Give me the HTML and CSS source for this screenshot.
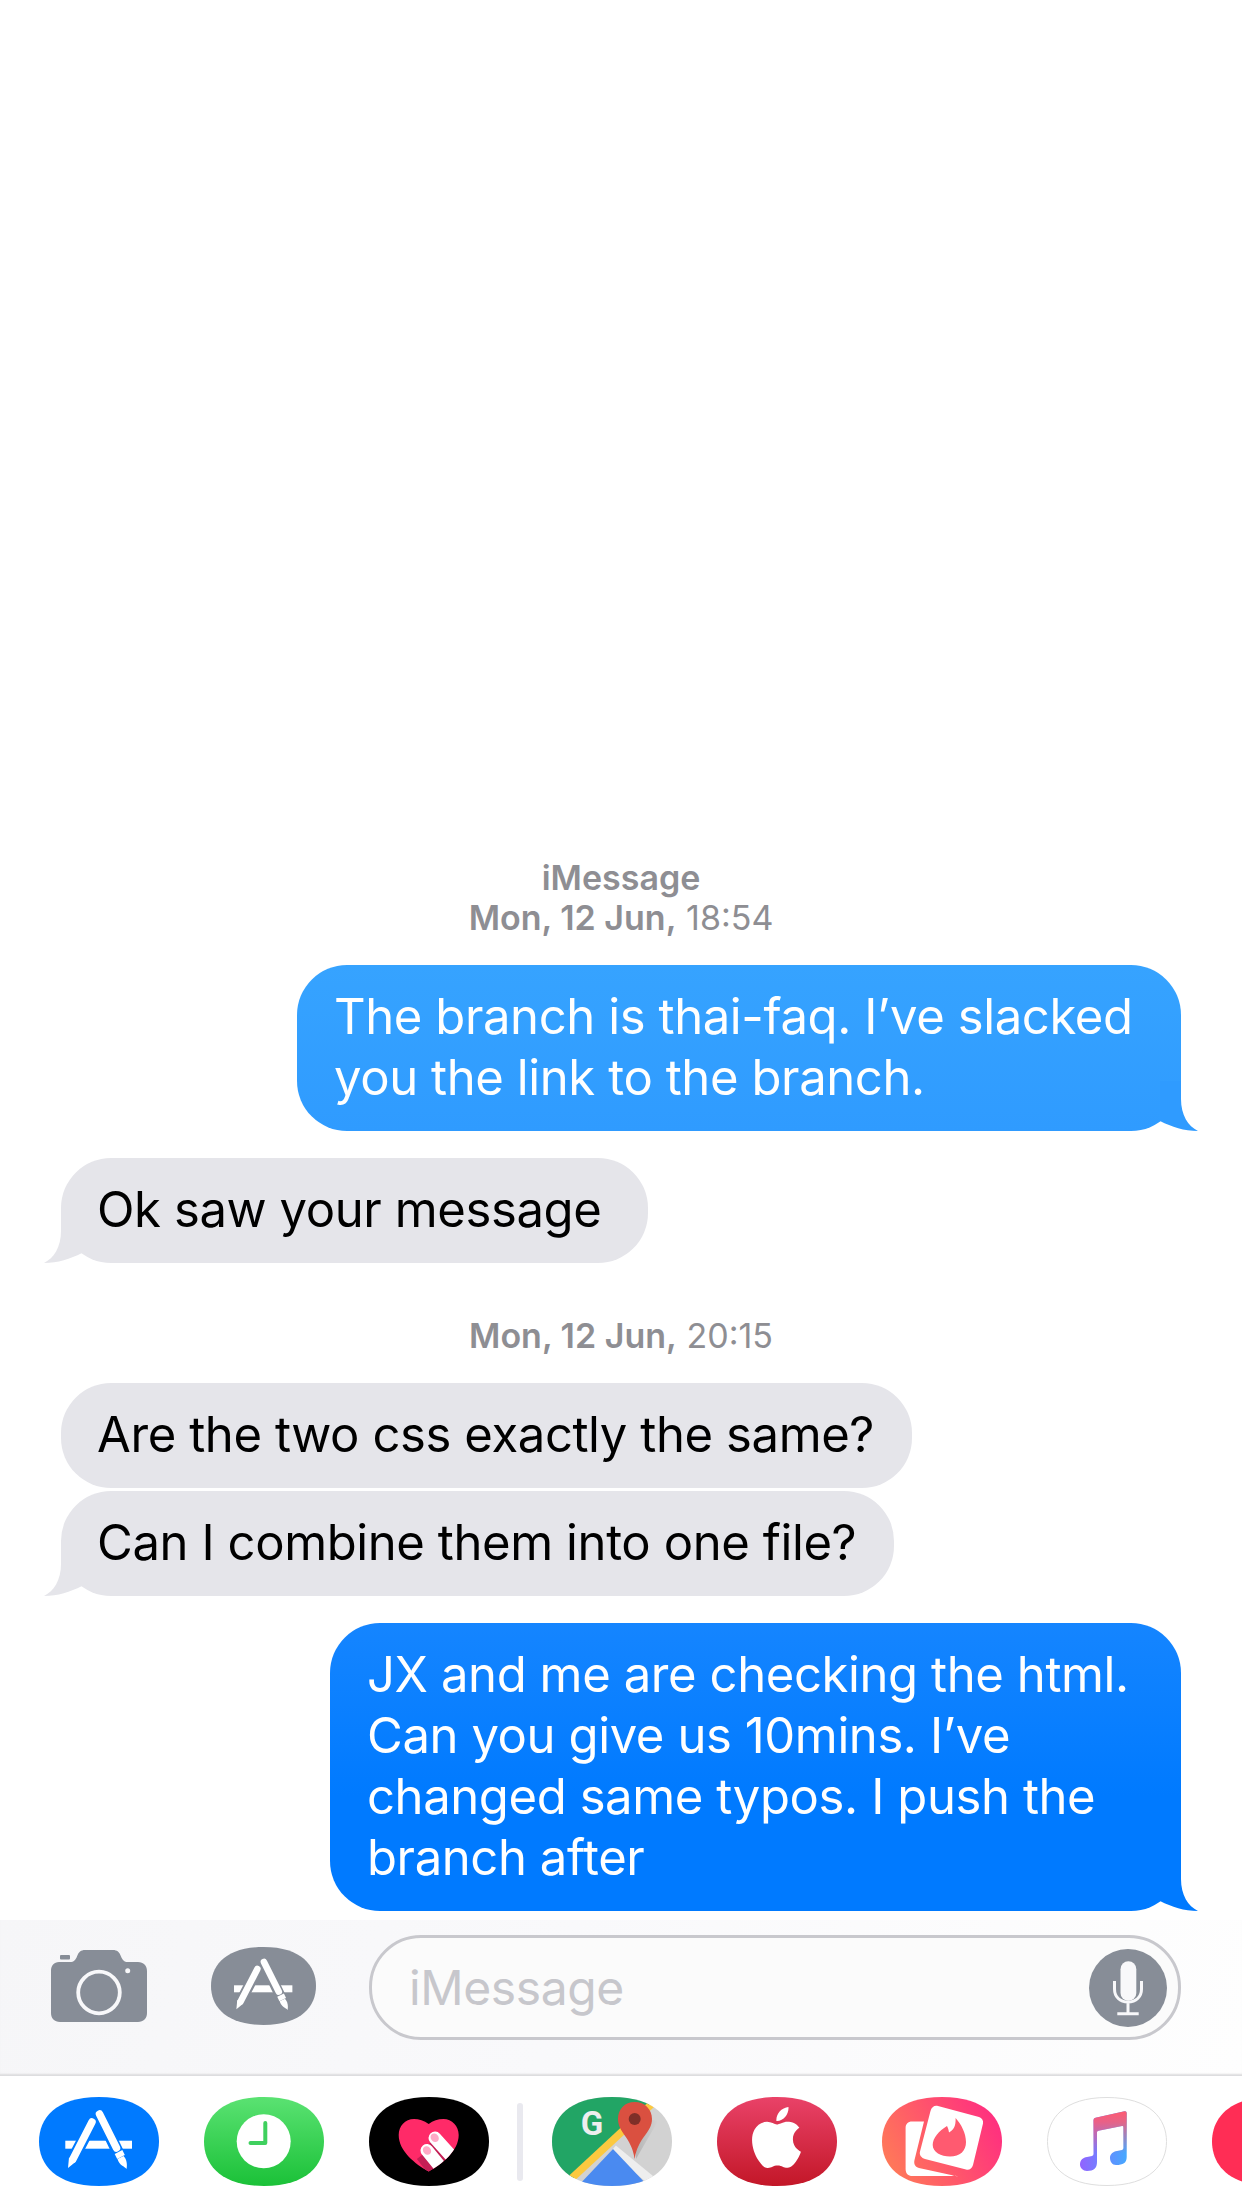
FILE: index.html
```html
<!DOCTYPE html>
<html lang="en">
<head>
<meta charset="utf-8">
<title>iMessage</title>
<link rel="stylesheet" href="styles.css">
</head>
<body>
<main class="thread">
  <div class="stamp"><b>iMessage</b><br><b>Mon, 12 Jun,</b> 18:54</div>
  <div class="bubble sent sky">The branch is thai-faq. I’ve slacked
you the link to the branch.<svg class="tail tail-r" viewBox="0 0 40 50"><path d="M21 0V18C21 34 28 45 38 50C24 50 12 46 0 40V0Z"/></svg></div>
  <div class="bubble recv saw">Ok saw your message<svg class="tail tail-l" viewBox="0 0 40 50"><path d="M19 0V18C19 34 12 45 2 50C16 50 28 46 40 40V0Z"/></svg></div>
  <div class="stamp stamp-later"><b>Mon, 12 Jun,</b> 20:15</div>
  <div class="bubble recv same">Are the two css exactly the same?</div>
  <div class="bubble recv tight combine">Can I combine them into one file?<svg class="tail tail-l" viewBox="0 0 40 50"><path d="M19 0V18C19 34 12 45 2 50C16 50 28 46 40 40V0Z"/></svg></div>
  <div class="bubble sent deep">JX and me are checking the html.
Can you give us 10mins. I’ve
changed same typos. I push the
branch after<svg class="tail tail-r" viewBox="0 0 40 50"><path d="M21 0V18C21 34 28 45 38 50C24 50 12 46 0 40V0Z"/></svg></div>
</main>

<section class="toolbar">
  <svg class="camera" viewBox="0 0 96 72">
    <path fill="#878d97" d="M8 12H19C23 12 24.500 10 26 6.500C27.500 2 30 0 34 0H62C66 0 68.500 2 70 6.500C71.500 10 73 12 77 12H87C92.500 12 96 15.500 96 21V63C96 68.500 92.500 72 87 72H9C3.500 72 0 68.500 0 63V21C0 15.500 3 12 8 12Z"/>
    <rect fill="#878d97" x="9" y="5" width="10" height="4.500" rx="1"/>
    <circle cx="48" cy="42.500" r="20.800" fill="none" stroke="#f8f8fa" stroke-width="3.800"/>
    <circle cx="76.700" cy="20.700" r="2.500" fill="#f8f8fa"/>
  </svg>
  <svg class="store-btn" viewBox="0 0 120 89">
    <path fill="#878d97" d="M60 0C104 0 120 22 120 44.500C120 67 104 89 60 89C16 89 0 67 0 44.500C0 22 16 0 60 0Z"/>
    <g class="glyph glyph-grey">
      <rect class="bar" x="26.300" y="43.700" width="66.700" height="8"/>
      <path class="gap" d="M33 64L54 24M60 16L84 66"/>
      <path class="pen" d="M34 62L53 25"/>
      <path class="pen" d="M60.500 17L77.500 51"/>
      <path class="pen butt" d="M79.500 55L82 60"/>
      <path class="solid" d="M29 71L30 60.500L37 64.500ZM78.500 62L84.500 59C87.500 62 88.500 67 87.500 72C85.500 69 80.500 69 78.500 62Z"/>
    </g>
  </svg>
  <div class="field">
    <span class="placeholder">iMessage</span>
    <svg class="mic" viewBox="0 0 78 78">
      <circle cx="39" cy="39" r="39" fill="#878d97"/>
      <rect x="31.500" y="12.300" width="15.800" height="39.500" rx="7.900" fill="#f8f8fa"/>
      <path d="M25.500 32V40C25.500 48 31 53 39 53C47 53 52.500 48 52.500 40V32M39 53V64M28.300 64.700H49.700" fill="none" stroke="#f8f8fa" stroke-width="3"/>
    </svg>
  </div>
</section>

<nav class="dock">
  <svg class="app" viewBox="0 0 120 89">
    <path fill="#007aff" d="M60 0C104 0 120 22 120 44.500C120 67 104 89 60 89C16 89 0 67 0 44.500C0 22 16 0 60 0Z"/>
    <g class="glyph glyph-blue">
      <rect class="bar" x="26.300" y="43.700" width="66.700" height="8"/>
      <path class="gap" d="M33 64L54 24M60 16L84 66"/>
      <path class="pen" d="M34 62L53 25"/>
      <path class="pen" d="M60.500 17L77.500 51"/>
      <path class="pen butt" d="M79.500 55L82 60"/>
      <path class="solid" d="M29 71L30 60.500L37 64.500ZM78.500 62L84.500 59C87.500 62 88.500 67 87.500 72C85.500 69 80.500 69 78.500 62Z"/>
    </g>
  </svg>
  <svg class="app" viewBox="0 0 120 89">
    <defs><linearGradient id="clockBg" x1="0" y1="0" x2="0" y2="1"><stop offset="0" stop-color="#5ae272"/><stop offset="1" stop-color="#1bc138"/></linearGradient></defs>
    <path fill="url(#clockBg)" d="M60 0C104 0 120 22 120 44.500C120 67 104 89 60 89C16 89 0 67 0 44.500C0 22 16 0 60 0Z"/>
    <circle cx="59.700" cy="44.300" r="27" fill="#fff"/>
    <path d="M61.300 26V46H46.500" fill="none" stroke="#3fd05e" stroke-width="4" stroke-linecap="round" stroke-linejoin="round"/>
  </svg>
  <svg class="app" viewBox="0 0 120 89">
    <defs><clipPath id="heartClip"><path d="M59.700 27C55 23.500 50 22 45 22C36 22 29.700 29 29.700 38C29.700 54 46 67 59.700 74.500C73 67 89.700 54 89.700 38C89.700 29 83 22 74.500 22C69 22 64 23.500 59.700 27Z"/></clipPath></defs>
    <path fill="#000" d="M60 0C104 0 120 22 120 44.500C120 67 104 89 60 89C16 89 0 67 0 44.500C0 22 16 0 60 0Z"/>
    <g clip-path="url(#heartClip)">
      <rect width="120" height="89" fill="#ff2a68"/>
      <path d="M53 58L70 80M61 46L86 74" stroke="#c41f55" stroke-width="13"/>
      <path d="M58 53.500L74 73M66 41L92 70" stroke="#fff" stroke-width="13" stroke-linecap="round"/>
      <ellipse cx="58" cy="53.500" rx="3.800" ry="4.600" fill="#ffa9c6" transform="rotate(-40 58 53.500)"/>
      <ellipse cx="65.700" cy="40.800" rx="3.800" ry="4.600" fill="#ffa9c6" transform="rotate(-40 65.700 40.800)"/>
    </g>
  </svg>
  <span class="divider"></span>
  <svg class="app" viewBox="0 0 120 89">
    <defs>
      <clipPath id="mapClip"><path d="M60 0C104 0 120 22 120 44.500C120 67 104 89 60 89C16 89 0 67 0 44.500C0 22 16 0 60 0Z"/></clipPath>
      <linearGradient id="pinShade" x1="0" y1="0" x2="1" y2="0"><stop offset="0" stop-color="#000" stop-opacity=".14"/><stop offset="1" stop-color="#000" stop-opacity="0"/></linearGradient>
    </defs>
    <g clip-path="url(#mapClip)">
      <rect width="120" height="89" fill="#d2d2d2"/>
      <path d="M0 0H105L14 89H0Z" fill="#22a565"/>
      <path d="M20 81L103 4" stroke="#fcc93f" stroke-width="7.500" fill="none"/>
      <path d="M61 52L100 84" stroke="#eeeeee" stroke-width="9" fill="none"/>
      <path d="M61 52L26 89H96Z" fill="#4a8af0"/>
      <path d="M84 20L106 24L84 62Z" fill="url(#pinShade)"/>
      <path d="M82.700 5C93 5 100 12.500 100 22C100 36 86 40 82.700 62C79.500 40 66 36 66 22C66 12.500 72.500 5 82.700 5Z" fill="#da5040"/>
      <circle cx="82.700" cy="22" r="6" fill="#7f2f28"/>
      <text class="map-g" x="40" y="37.500">G</text>
    </g>
  </svg>
  <svg class="app" viewBox="0 0 120 89">
    <defs><linearGradient id="appleBg" x1="0" y1="0" x2="0" y2="1"><stop offset="0" stop-color="#e94268"/><stop offset="1" stop-color="#c31728"/></linearGradient></defs>
    <path fill="url(#appleBg)" d="M60 0C104 0 120 22 120 44.500C120 67 104 89 60 89C16 89 0 67 0 44.500C0 22 16 0 60 0Z"/>
    <path fill="#fff" transform="translate(29.500 10) scale(2.500 2.540)" d="M12.152 6.896c-.948 0-2.415-1.078-3.960-1.040-2.040.027-3.910 1.183-4.961 3.014-2.117 3.675-.546 9.103 1.519 12.090 1.013 1.454 2.208 3.090 3.792 3.039 1.520-.065 2.090-.987 3.935-.987 1.831 0 2.350.987 3.960.948 1.637-.026 2.676-1.480 3.676-2.948 1.156-1.688 1.636-3.325 1.662-3.415-.039-.013-3.182-1.221-3.220-4.857-.026-3.040 2.480-4.494 2.597-4.559-1.429-2.090-3.623-2.324-4.390-2.376-2-.156-3.675 1.090-4.610 1.090zM15.530 3.830c.843-1.012 1.400-2.427 1.245-3.830-1.207.052-2.662.805-3.532 1.818-.780.896-1.454 2.338-1.273 3.714 1.338.104 2.715-.688 3.559-1.701"/>
  </svg>
  <svg class="app" viewBox="0 0 120 89">
    <defs><linearGradient id="tinderBg" x1="0" y1=".7" x2="1" y2=".3"><stop offset="0" stop-color="#ff7a58"/><stop offset="1" stop-color="#ff2e80"/></linearGradient></defs>
    <path fill="url(#tinderBg)" d="M60 0C104 0 120 22 120 44.500C120 67 104 89 60 89C16 89 0 67 0 44.500C0 22 16 0 60 0Z"/>
    <path fill="#fff" d="M30 24.500H42L32.500 63C31.500 67.500 33.500 70 37 71L76 79.500C75 79 73 78.500 70 79H30.500C26 79 23.600 76.500 23.600 72V31C23.600 27 26 24.500 30 24.500Z"/>
    <path fill="#fff" d="M56 9L97 20C100 21 101.500 23.500 101 26.500L91 68C90 71.500 87 73.500 84 72.500L43 62C39.500 61 37 58 38 54.500L48.500 14C49.500 10 52.500 8 56 9Z"/>
    <path fill="#ff5a70" d="M73.600 21C74 30 71 33 67 35.500C66.700 33 66 31 65 29C57 34 50.700 41 50.700 48C50.700 55 59 59.500 68 59.500C78 59.500 84 54 84 45C84 36 79 27 73.600 21Z"/>
  </svg>
  <svg class="app" viewBox="0 0 120 89">
    <defs>
      <linearGradient id="noteBase" x1="0" y1="0" x2="1" y2="0"><stop offset="0" stop-color="#9263ff"/><stop offset="1" stop-color="#45a9ff"/></linearGradient>
      <linearGradient id="noteTop" x1="0" y1="0" x2="0" y2="1"><stop offset="0" stop-color="#ff5a72"/><stop offset=".18" stop-color="#ff5a72" stop-opacity=".85"/><stop offset=".7" stop-color="#ff5a72" stop-opacity="0"/></linearGradient>
    </defs>
    <path fill="#fff" stroke="#dedede" d="M60 .5C103.500 .5 119.500 22 119.500 44.500C119.500 67 103.500 88.500 60 88.500C16.500 88.500 .5 67 .5 44.500C.5 22 16.500 .5 60 .5Z"/>
    <path fill="url(#noteBase)" d="M46.500 23Q46.500 21 48.500 20.700L77.500 14.300Q79.700 14 79.700 16V60C79.700 66 76 68 69 68C65 68 63 64.500 63 61C63 57 66 54.500 70 54L75 53Q76.400 52.700 76.400 51V30Q76.400 28.700 75 29L51.500 33.700Q50 34 50 35.500V65C50 71 47 74 40 74C36 74 33 71 33 67.500C33 63 36 60.500 40 60L45 59Q46.500 58.700 46.500 57Z"/>
    <path fill="url(#noteTop)" d="M46.500 23Q46.500 21 48.500 20.700L77.500 14.300Q79.700 14 79.700 16V60C79.700 66 76 68 69 68C65 68 63 64.500 63 61C63 57 66 54.500 70 54L75 53Q76.400 52.700 76.400 51V30Q76.400 28.700 75 29L51.500 33.700Q50 34 50 35.500V65C50 71 47 74 40 74C36 74 33 71 33 67.500C33 63 36 60.500 40 60L45 59Q46.500 58.700 46.500 57Z"/>
  </svg>
  <svg class="app" viewBox="0 0 120 89">
    <path fill="#ff2d55" d="M60 0C104 0 120 22 120 44.500C120 67 104 89 60 89C16 89 0 67 0 44.500C0 22 16 0 60 0Z"/>
  </svg>
</nav>
</body>
</html>
```
FILE: styles.css
```css
* { box-sizing: border-box; }
html, body { margin: 0; padding: 0; }
body {
  width: 1242px;
  height: 2208px;
  overflow: hidden;
  background: #fff;
  font-family: Inter, "Liberation Sans", sans-serif;
  display: flex;
  flex-direction: column;
}
.thread {
  height: 1920px;
  flex: none;
  padding-bottom: 9px;
  display: flex;
  flex-direction: column;
  justify-content: flex-end;
}
.stamp {
  height: 80px;
  margin-bottom: 27px;
  text-align: center;
  font-size: 34px;
  line-height: 40px;
  color: #8e8e93;
  font-weight: 400;
}
.stamp b { font-weight: 600; }
.stamp-later { height: 40px; margin-top: 53px; }
.bubble {
  position: relative;
  white-space: pre;
  font-size: 49px;
  line-height: 61px;
  letter-spacing: -0.4px;
  border-radius: 50px;
}
.sent {
  align-self: flex-end;
  margin-right: 61px;
  margin-top: 27px;
  padding: 21px 0 23px 37px;
  color: #fff;
}
.sky { width: 884px; background: linear-gradient(#36a3ff, #2f9bff); color: #fff; margin-top: 0; }
.deep { width: 851px; background: linear-gradient(#1585ff, #007aff 60%); }
.recv {
  align-self: flex-start;
  margin-left: 61px;
  padding: 21px 0 23px 36px;
  background: #e5e5ea;
  color: #000;
}
.saw { width: 587px; }
.same { width: 851px; }
.combine { width: 833px; }
.sky + .recv { margin-top: 27px; }
.tight { margin-top: 3px; }
.tail { position: absolute; bottom: 0; width: 40px; height: 50px; display: block; }
.tail-r { right: -19px; }
.tail-l { left: -19px; }
.sky .tail { fill: #2f9bff; }
.deep .tail { fill: #007aff; }
.recv .tail { fill: #e5e5ea; }

.toolbar {
  height: 156px;
  flex: none;
  display: flex;
  align-items: flex-start;
  padding: 15px 61px 0 51px;
  background: linear-gradient(105deg, #f6f6f8, #f9f9fb 45%, #fefefe);
  box-shadow: inset 0 -3px 2px -1px #dcdcde;
}
.camera { width: 96px; height: 72px; flex: none; margin-top: 15px; }
.store-btn { width: 105px; height: 78px; flex: none; margin: 12px 0 0 64px; }
.field {
  flex: none;
  width: 812px;
  height: 105px;
  margin-left: 53px;
  border: 3px solid #c8c8cd;
  border-radius: 52px;
  background: #fbfbfb;
  display: flex;
  align-items: center;
  justify-content: space-between;
  padding: 0 11px 0 37px;
}
.placeholder { font-size: 48px; letter-spacing: -0.4px; color: #c7c7cc; }
.mic { width: 78px; height: 78px; display: block; }

.glyph .bar { fill: #fff; }
.gap { fill: none; stroke-width: 12; }
.glyph-blue .gap { stroke: #007aff; }
.glyph-grey .gap { stroke: #878d97; }
.pen { fill: none; stroke: #fff; stroke-width: 7.500; stroke-linecap: round; }
.butt { stroke-linecap: butt; stroke-width: 8.500; }
.solid { fill: #fff; }

.dock {
  flex: 1;
  display: flex;
  align-items: flex-start;
  padding: 21px 0 0 39px;
  background: #fff;
  overflow: hidden;
}
.app { width: 120px; height: 89px; flex: none; margin-right: 45px; display: block; }
.divider {
  flex: none;
  width: 6px;
  height: 78px;
  margin: 6px 29px 0 -17px;
  border-radius: 3px;
  background: #e9e9ef;
}
.map-g { font-family: Roboto, sans-serif; font-weight: 700; font-size: 33px; fill: #eeeeee; text-anchor: middle; }
```
